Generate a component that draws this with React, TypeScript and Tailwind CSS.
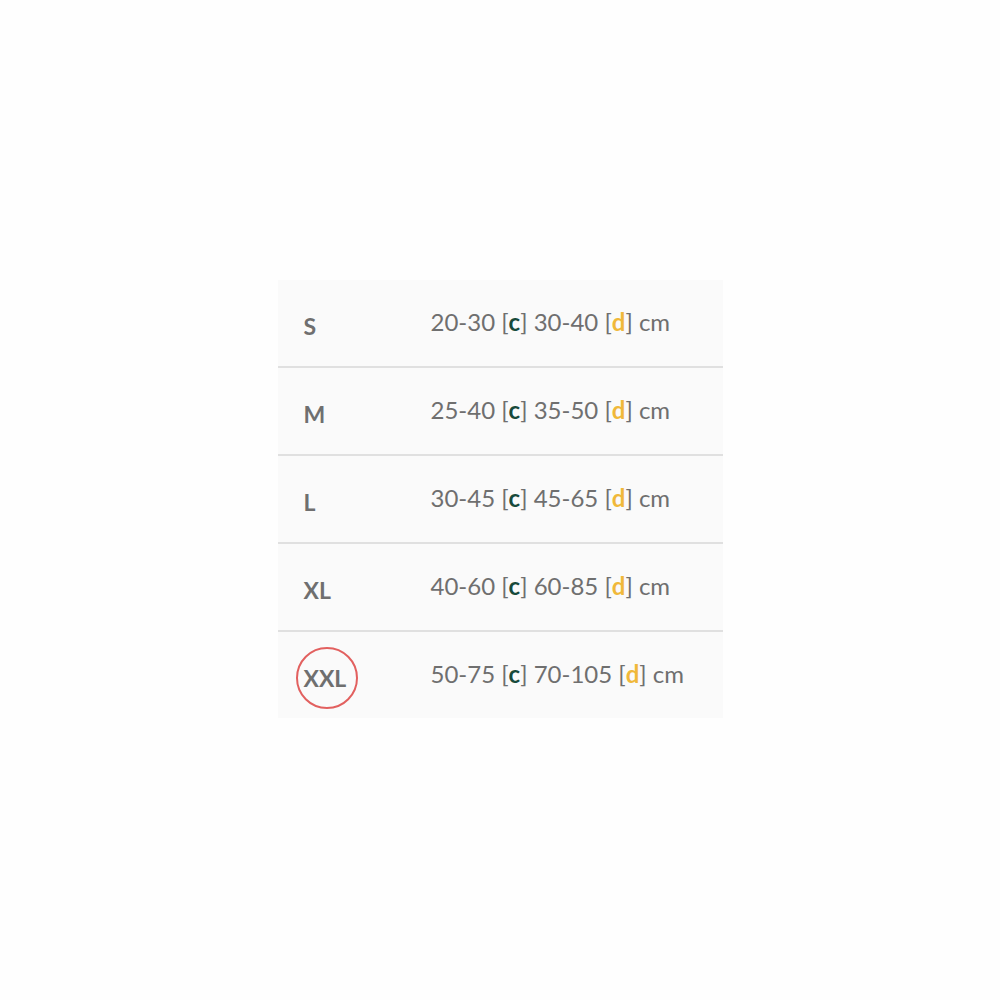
const rows = [
  { size: "S", c: "20-30", d: "30-40" },
  { size: "M", c: "25-40", d: "35-50" },
  { size: "L", c: "30-45", d: "45-65" },
  { size: "XL", c: "40-60", d: "60-85" },
  { size: "XXL", c: "50-75", d: "70-105", marked: true },
];

export default function App() {
  return (
    <div
      className="w-[1000px] h-[1000px] bg-[#fefefe] flex items-center justify-center text-[#6f6f6f]"
      style={{ fontFamily: "Lato, 'Open Sans', sans-serif" }}
    >
      <div className="w-[445px] bg-[#fafafa] flex flex-col mt-[-2px]">
        {rows.map((r, i) => (
          <div
            key={r.size}
            className={
              i < rows.length - 1
                ? "h-[88px] flex items-center border-b-2 border-[#e0e0e0]"
                : "h-[86px] flex items-center"
            }
          >
            <div className="w-[153px] pl-[26px] relative">
              {r.marked && (
                <div className="absolute left-[18px] top-1/2 -translate-y-1/2 mt-[3px] w-[62px] h-[62px] rounded-full border-2 border-[#e2605f]" />
              )}
              <span className="relative block text-[23px] font-bold mt-[7px]">{r.size}</span>
            </div>
            <div className="text-[24px] mt-[-2px]">
              {r.c} [<span className="font-bold text-[#174a3b]">c</span>] {r.d} [
              <span className="font-bold text-[#f0b83a]">d</span>] cm
            </div>
          </div>
        ))}
      </div>
    </div>
  );
}
